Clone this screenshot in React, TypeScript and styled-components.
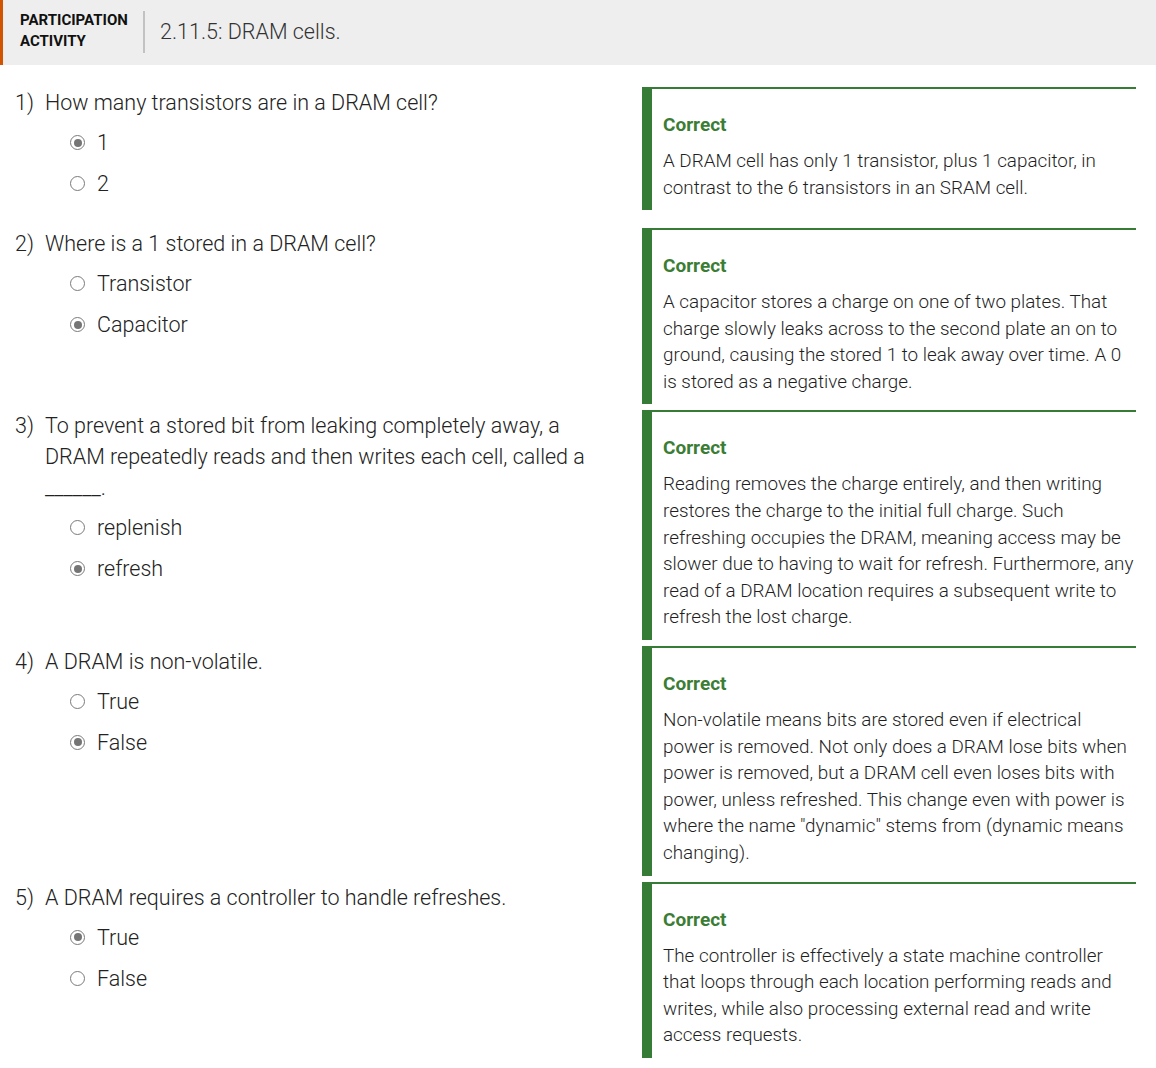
import styled, { createGlobalStyle } from "styled-components";

interface Question {
  prompt: string;
  options: string[];
  picked: number;
  explanation: string;
}

const questions: Question[] = [
  {
    prompt: "How many transistors are in a DRAM cell?",
    options: ["1", "2"],
    picked: 0,
    explanation:
      "A DRAM cell has only 1 transistor, plus 1 capacitor, in contrast to the 6 transistors in an SRAM cell.",
  },
  {
    prompt: "Where is a 1 stored in a DRAM cell?",
    options: ["Transistor", "Capacitor"],
    picked: 1,
    explanation:
      "A capacitor stores a charge on one of two plates. That charge slowly leaks across to the second plate an on to ground, causing the stored 1 to leak away over time. A 0 is stored as a negative charge.",
  },
  {
    prompt:
      "To prevent a stored bit from leaking completely away, a DRAM repeatedly reads and then writes each cell, called a ______.",
    options: ["replenish", "refresh"],
    picked: 1,
    explanation:
      "Reading removes the charge entirely, and then writing restores the charge to the initial full charge. Such refreshing occupies the DRAM, meaning access may be slower due to having to wait for refresh. Furthermore, any read of a DRAM location requires a subsequent write to refresh the lost charge.",
  },
  {
    prompt: "A DRAM is non-volatile.",
    options: ["True", "False"],
    picked: 1,
    explanation:
      'Non-volatile means bits are stored even if electrical power is removed. Not only does a DRAM lose bits when power is removed, but a DRAM cell even loses bits with power, unless refreshed. This change even with power is where the name "dynamic" stems from (dynamic means changing).',
  },
  {
    prompt: "A DRAM requires a controller to handle refreshes.",
    options: ["True", "False"],
    picked: 0,
    explanation:
      "The controller is effectively a state machine controller that loops through each location performing reads and writes, while also processing external read and write access requests.",
  },
];

const GlobalStyle = createGlobalStyle`
  body {
    margin: 0;
    background: #ffffff;
    font-family: Roboto, "Noto Sans", sans-serif;
    color: #222222;
  }
`;

const Page = styled.div`
  width: 1156px;
`;

const Header = styled.div`
  display: flex;
  align-items: center;
  height: 65px;
  background: #eeeeee;
  border-left: 3px solid #d35400;
  box-sizing: border-box;
`;

const ActivityLabel = styled.div`
  width: 123px;
  padding-left: 17px;
  font-size: 15px;
  font-weight: 700;
  line-height: 21px;
  color: #111111;
  margin-top: -4px;
`;

const Divider = styled.div`
  width: 2px;
  height: 42px;
  background: #c2c2c2;
  margin-top: -2px;
`;

const Title = styled.h1`
  margin: -3px 0 0 15px;
  font-size: 21.5px;
  font-weight: 300;
  color: #333333;
`;

const Body = styled.div`
  padding: 22px 20px 0 15px;
`;

const Row = styled.div`
  display: flex;
  align-items: flex-start;
  gap: 22px;
  margin-bottom: 6px;
`;

const QuestionBlock = styled.div`
  flex: 1;
  padding-bottom: 18px;
`;

const Prompt = styled.div`
  display: flex;
  font-size: 21.5px;
  font-weight: 300;
  line-height: 31px;
  color: #222222;
`;

const Number = styled.span`
  width: 30px;
  flex-shrink: 0;
`;

const Options = styled.div`
  padding: 4px 0 0 55px;
`;

const Option = styled.label`
  display: flex;
  align-items: center;
  height: 41px;
  font-size: 21.5px;
  font-weight: 300;
  color: #222222;
`;

const Radio = styled.span<{ $checked: boolean }>`
  width: 15px;
  height: 15px;
  box-sizing: border-box;
  border-radius: 50%;
  border: 1.5px solid #7a7a7a;
  margin-right: 12px;
  display: flex;
  align-items: center;
  justify-content: center;
  background: #ffffff;

  &::after {
    content: "";
    display: ${(p) => (p.$checked ? "block" : "none")};
    width: 8px;
    height: 8px;
    border-radius: 50%;
    background: #757575;
  }
`;

const Explanation = styled.div`
  width: 494px;
  box-sizing: border-box;
  border-top: 2px solid #367c36;
  border-left: 10px solid #367c36;
  padding: 25px 0 9px 11px;
`;

const Verdict = styled.div`
  font-size: 19px;
  font-weight: 700;
  line-height: 22px;
  color: #3b7d34;
  margin-bottom: 12px;
`;

const ExplanationText = styled.div`
  font-size: 18.85px;
  font-weight: 300;
  line-height: 26.6px;
  color: #1f1f1f;
`;

const App = () => {
  const renderRows = questions.map((q, i) => (
    <Row key={q.prompt}>
      <QuestionBlock>
        <Prompt>
          <Number>{`${i + 1})`}</Number>
          <span>{q.prompt}</span>
        </Prompt>
        <Options>
          {q.options.map((opt, j) => (
            <Option key={opt}>
              <Radio $checked={j === q.picked} />
              {opt}
            </Option>
          ))}
        </Options>
      </QuestionBlock>
      <Explanation>
        <Verdict>Correct</Verdict>
        <ExplanationText>{q.explanation}</ExplanationText>
      </Explanation>
    </Row>
  ));

  return (
    <Page>
      <GlobalStyle />
      <Header>
        <ActivityLabel>
          PARTICIPATION
          <br />
          ACTIVITY
        </ActivityLabel>
        <Divider />
        <Title>2.11.5: DRAM cells.</Title>
      </Header>
      <Body>{renderRows}</Body>
    </Page>
  );
};

export default App;
